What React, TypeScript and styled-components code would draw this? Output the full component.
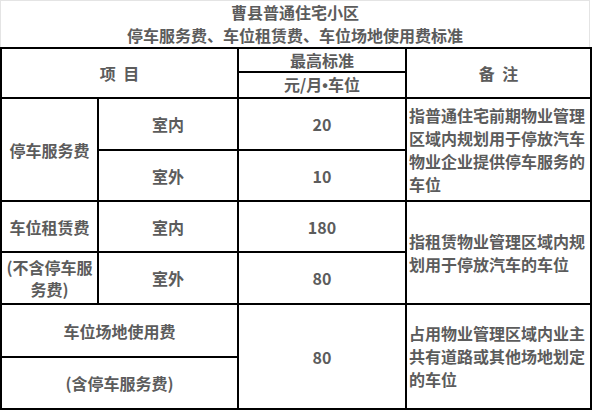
import React from 'react';
import styled, { createGlobalStyle } from 'styled-components';

const GlobalStyle = createGlobalStyle`
  html, body {
    margin: 0;
    padding: 0;
    background: #ffffff;
  }
  body {
    font-family: "Noto Sans CJK SC", "Liberation Sans", sans-serif;
    color: #5c5c5c;
  }
`;

const Sheet = styled.div`
  width: 590px;
`;

const Caption = styled.div`
  height: 47px;
  box-sizing: border-box;
  border: 1px solid #e4e4e4;
  border-bottom: none;
  display: flex;
  flex-direction: column;
  align-items: center;
  justify-content: center;
  font-size: 16px;
  font-weight: 700;
  line-height: 23px;
`;

const Grid = styled.table`
  width: 590px;
  table-layout: fixed;
  border-collapse: collapse;
  border: 2px solid #000;
  font-size: 16px;
  font-weight: 700;
  line-height: 22px;
`;

const Row = styled.tr<{ $h: number }>`
  height: ${(p) => p.$h}px;
`;

const Cell = styled.td<{ $align?: 'left' | 'center' }>`
  border: 2px solid #000;
  padding: ${(p) => (p.$align === 'left' ? '0 0 0 2px' : '0 1px')};
  text-align: ${(p) => p.$align ?? 'center'};
  vertical-align: middle;
  word-break: break-all;
`;

const Note = styled.div`
  line-height: 23px;
`;

const Spaced = styled.span`
  word-spacing: 4px;
`;

const Dot = styled.span`
  font-family: "Liberation Sans", sans-serif;
`;

export default function App() {
  return (
    <>
      <GlobalStyle />
      <Sheet>
        <Caption>
          <div>曹县普通住宅小区</div>
          <div>停车服务费、车位租赁费、车位场地使用费标准</div>
        </Caption>
        <Grid>
          <colgroup>
            <col style={{ width: 97 }} />
            <col style={{ width: 140 }} />
            <col style={{ width: 168 }} />
            <col style={{ width: 185 }} />
          </colgroup>
          <tbody>
            <Row $h={24}>
              <Cell colSpan={2} rowSpan={2}>
                <Spaced>项 目</Spaced>
              </Cell>
              <Cell>最高标准</Cell>
              <Cell rowSpan={2}>
                <Spaced>备 注</Spaced>
              </Cell>
            </Row>
            <Row $h={26}>
              <Cell>
                元/月<Dot>•</Dot>车位
              </Cell>
            </Row>
            <Row $h={52}>
              <Cell rowSpan={2}>停车服务费</Cell>
              <Cell>室内</Cell>
              <Cell>20</Cell>
              <Cell rowSpan={2} $align="left">
                <Note>指普通住宅前期物业管理区域内规划用于停放汽车物业企业提供停车服务的车位</Note>
              </Cell>
            </Row>
            <Row $h={51}>
              <Cell>室外</Cell>
              <Cell>10</Cell>
            </Row>
            <Row $h={51}>
              <Cell>车位租赁费</Cell>
              <Cell>室内</Cell>
              <Cell>180</Cell>
              <Cell rowSpan={2} $align="left">
                <Note>指租赁物业管理区域内规划用于停放汽车的车位</Note>
              </Cell>
            </Row>
            <Row $h={52}>
              <Cell>(不含停车服务费)</Cell>
              <Cell>室外</Cell>
              <Cell>80</Cell>
            </Row>
            <Row $h={53}>
              <Cell colSpan={2}>车位场地使用费</Cell>
              <Cell rowSpan={2}>80</Cell>
              <Cell rowSpan={2} $align="left">
                <Note>占用物业管理区域内业主共有道路或其他场地划定的车位</Note>
              </Cell>
            </Row>
            <Row $h={52}>
              <Cell colSpan={2}>(含停车服务费)</Cell>
            </Row>
          </tbody>
        </Grid>
      </Sheet>
    </>
  );
}
